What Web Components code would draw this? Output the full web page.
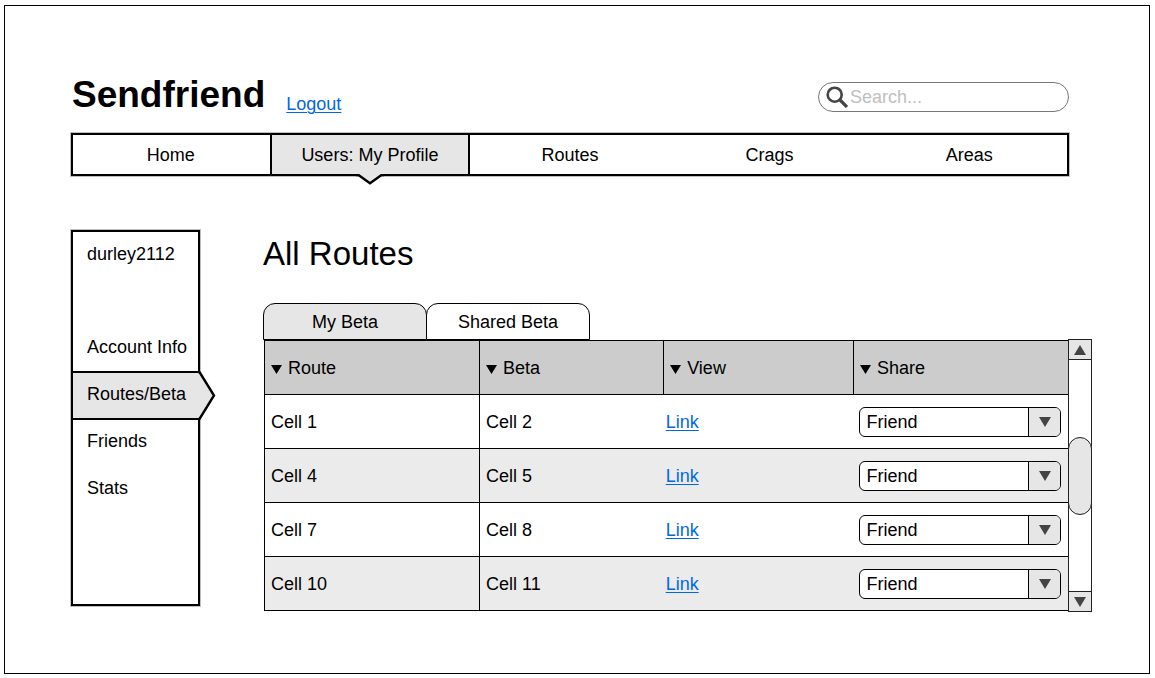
<!DOCTYPE html>
<html lang="en">
<head>
<meta charset="utf-8">
<title>Sendfriend - All Routes</title>
<style>
  body { margin: 0; background: #fff; color: #000; font: 18px/24px "Liberation Sans", Arial, sans-serif; }
  h1 { margin: 0; font-size: 33px; line-height: 48px; font-weight: 400; }
</style>
</head>
<body>
<sf-page>
  <sf-header slot="header"></sf-header>
  <sf-nav slot="nav"></sf-nav>
  <sf-sidebar slot="side" user="durley2112"></sf-sidebar>
  <h1 slot="title">All Routes</h1>
  <sf-tabs></sf-tabs>
  <sf-scroll-pane><sf-table></sf-table></sf-scroll-pane>
</sf-page>

<script>
function define(name, html, setup) {
  const template = document.createElement('template');
  template.innerHTML = html;
  customElements.define(name, class extends HTMLElement {
    connectedCallback() {
      if (this.shadowRoot) return;
      this.attachShadow({ mode: 'open' }).append(template.content.cloneNode(true));
      if (setup) setup(this, this.shadowRoot);
    }
  });
}

define('sf-page', `
<style>
  :host { display: flex; padding: 5px 5px 4px 4px; box-sizing: border-box; min-height: 100vh; }
  .frame { flex: 1; border: 1px solid #000; padding: 68px 57px 60px 66px; }
  .top { margin-right: 23px; display: flex; flex-direction: column; gap: 17px; }
  .body { display: flex; align-items: flex-start; gap: 63px; margin-top: 54px; }
  main { flex: 1; min-width: 0; }
  .tabs { margin-top: 25px; }
</style>
<div class="frame">
  <div class="top"><slot name="header"></slot><slot name="nav"></slot></div>
  <div class="body">
    <slot name="side"></slot>
    <main><slot name="title"></slot><div class="tabs"><slot></slot></div></main>
  </div>
</div>`);

define('sf-header', `
<style>
  :host { display: flex; justify-content: space-between; align-items: flex-end; padding-left: 1px; }
  .brand { display: flex; align-items: flex-end; gap: 21px; }
  .name { font-size: 37px; line-height: 42px; font-weight: 700; }
  a { color: #0068e6; text-decoration-thickness: 1px; text-underline-offset: 2px; }
  .search { display: flex; align-items: center; gap: 2px; box-sizing: border-box; width: 251px; height: 30px;
    margin-bottom: 4px; padding: 0 12px 0 7px; border: 1px solid #777; border-radius: 15px; }
  svg { flex: none; }
  input { flex: 1; min-width: 0; border: 0; padding: 0; background: none; font: inherit; outline: none; }
  input::placeholder { color: #bfbfbf; opacity: 1; }
</style>
<div class="brand"><span class="name">Sendfriend</span><a href="#logout">Logout</a></div>
<label class="search">
  <svg width="22" height="22" viewBox="0 0 22 22" fill="none" stroke="#444" aria-hidden="true">
    <circle cx="8.7" cy="8.7" r="7" stroke-width="2.6"/><path d="M13.5 13.5 21 21" stroke-width="3.2"/>
  </svg>
  <input type="search" placeholder="Search..." aria-label="Search">
</label>`);

define('sf-nav', `
<style>
  :host { display: block; }
  nav { display: grid; grid-template-columns: repeat(5, 1fr); height: 43px;
    outline: 2px solid #000; outline-offset: -2px; box-shadow: 0 0 0 1px rgba(0,0,0,.25); }
  a { display: flex; align-items: center; justify-content: center; color: inherit; text-decoration: none; }
  .on { position: relative; background: #e6e6e6; border: 2px solid #000; margin-left: -1px; }
  svg { position: absolute; top: 100%; left: 50%; margin-left: -14px; }
</style>
<nav>
  <a href="#home">Home</a>
  <a href="#users" class="on">Users: My Profile
    <svg width="28" height="12" viewBox="0 0 28 12" aria-hidden="true">
      <path d="M2 0H26L14 9Z" fill="#e6e6e6"/><path d="M0 1H2.5L14 9.3 25.5 1H28" fill="none" stroke="#000" stroke-width="2.4"/>
    </svg></a>
  <a href="#routes">Routes</a>
  <a href="#crags">Crags</a>
  <a href="#areas">Areas</a>
</nav>`);

define('sf-sidebar', `
<style>
  :host { display: block; flex: none; box-sizing: border-box; width: 129px; min-height: 376px;
    border: 2px solid #000; box-shadow: 0 0 0 1px rgba(0,0,0,.25); }
  .user { height: 92px; line-height: 44px; padding-left: 14px; }
  nav { display: flex; flex-direction: column; }
  a { line-height: 47px; padding-left: 14px; color: inherit; text-decoration: none; white-space: nowrap; }
  .on { position: relative; background: #e6e6e6; border: solid #000; border-width: 2px 0; line-height: 43px; padding-bottom: 2px; margin-bottom: -2px; }
  svg { position: absolute; left: 100%; top: -2px; }
</style>
<div class="user"></div>
<nav>
  <a href="#account">Account Info</a>
  <a href="#beta" class="on">Routes/Beta
    <svg width="20" height="49" viewBox="0 0 20 49" aria-hidden="true">
      <path d="M0 2H1.5L16 24.5 1.5 47H0Z" fill="#e6e6e6"/><path d="M0 1H1.5L16 24.5 1.5 48H0" fill="none" stroke="#000" stroke-width="2.4"/>
    </svg></a>
  <a href="#friends">Friends</a>
  <a href="#stats">Stats</a>
</nav>`, (host, root) => { root.querySelector('.user').textContent = host.getAttribute('user'); });

define('sf-tabs', `
<style>
  :host { display: block; }
  div { display: flex; }
  button { width: 164px; height: 37px; padding: 0; border: 1px solid #000; border-radius: 12px 12px 0 0;
    background: #fff; color: inherit; font: inherit; }
  button + button { margin-left: -1px; }
  [aria-selected=true] { background: #e6e6e6; }
</style>
<div role="tablist"><button role="tab" aria-selected="true">My Beta</button><button role="tab" aria-selected="false">Shared Beta</button></div>`);

define('sf-dropdown', `
<style>
  :host { display: grid; grid-template-columns: 1fr 32px; height: 30px; box-sizing: border-box;
    border: 1px solid #000; border-radius: 6px; background: #fff; overflow: hidden; }
  select { grid-area: 1 / 1 / 2 / 3; appearance: none; border: 0; margin: 0; padding: 0 40px 0 6px;
    background: none; color: inherit; font: inherit; outline: none; min-width: 0; }
  span { grid-area: 1 / 2; display: grid; place-items: center; border-left: 1px solid #000; background: #e6e6e6; pointer-events: none; }
</style>
<select aria-label="Share with"><option>Friend</option></select>
<span><svg width="12" height="10" aria-hidden="true"><path d="M0 0H12L6 10Z" fill="#444"/></svg></span>`);

define('sf-table', `
<style>
  :host { display: block; }
  table { width: 100%; table-layout: fixed; border-collapse: collapse; }
  th, td { box-sizing: border-box; height: 54px; padding: 0 7px 0 6px; text-align: left; font-weight: 400; border: solid #000; border-width: 1px 0; }
  th { background: #ccc; border-width: 1px; }
  th svg { margin-right: 6px; }
  td:first-child { border-left-width: 1px; border-right-width: 1px; }
  td:nth-child(3) { padding-left: 2px; }
  td:last-child { border-right-width: 1px; }
  tr:nth-child(even) td { background: #ebebeb; }
  a { color: #0068e6; text-decoration-thickness: 1px; text-underline-offset: 2px; }
  col:nth-child(2) { width: 22.9%; }
  col:nth-child(3) { width: 23.6%; }
</style>
<table>
  <colgroup><col><col><col><col></colgroup>
  <thead><tr></tr></thead>
  <tbody></tbody>
</table>`, (host, root) => {
  const arrow = '<svg width="11" height="9" aria-hidden="true"><path d="M0 0H11L5.5 9Z"/></svg>';
  root.querySelector('thead tr').innerHTML = ['Route', 'Beta', 'View', 'Share'].map(t => `<th scope="col">${arrow}${t}</th>`).join('');
  root.querySelector('tbody').innerHTML = [[1, 2], [4, 5], [7, 8], [10, 11]].map(([a, b]) =>
    `<tr><td>Cell ${a}</td><td>Cell ${b}</td><td><a href="#beta-${a}">Link</a></td><td><sf-dropdown></sf-dropdown></td></tr>`).join('');
});

define('sf-scroll-pane', `
<style>
  :host { display: flex; padding-left: 1px; }
  .view { flex: 1; min-width: 0; }
  .bar { display: flex; flex-direction: column; box-sizing: border-box; width: 24px; margin: -1px 0 -1px -1px; border: 1px solid #222; background: #fff; }
  button { display: grid; place-items: center; height: 20px; padding: 0; border: 0 solid #222; background: #e6e6e6; box-sizing: border-box; }
  .up { border-bottom-width: 1px; }
  .down { border-top-width: 1px; }
  .track { flex: 1; display: flex; align-items: center; margin: 0 -1px; }
  .thumb { flex: 1; height: 78px; box-sizing: border-box; border: 1px solid #222; border-radius: 12px; background: #e6e6e6; }
</style>
<div class="view"><slot></slot></div>
<div class="bar">
  <button class="up" aria-label="Scroll up"><svg width="12" height="10"><path d="M0 10H12L6 0Z" fill="#444"/></svg></button>
  <div class="track"><div class="thumb"></div></div>
  <button class="down" aria-label="Scroll down"><svg width="12" height="10"><path d="M0 0H12L6 10Z" fill="#444"/></svg></button>
</div>`);
</script>
</body>
</html>
